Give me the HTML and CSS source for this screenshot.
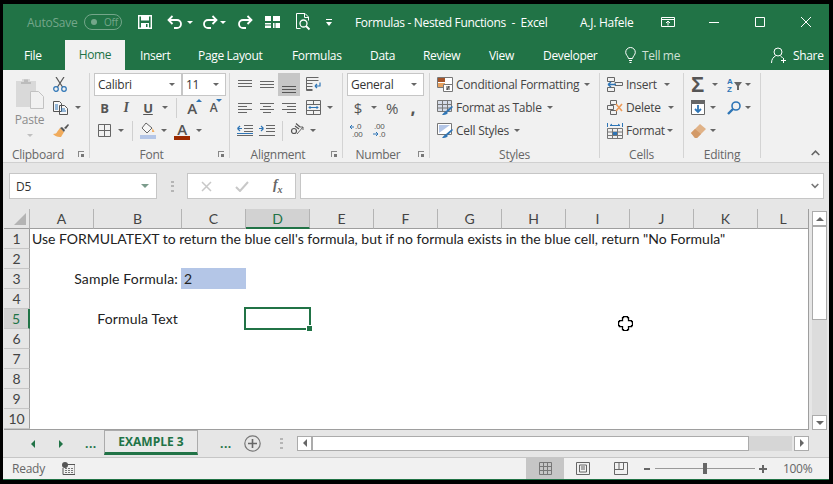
FILE: index.html
```html
<!DOCTYPE html>
<html lang="en">
<head>
<meta charset="utf-8">
<title>Formulas - Nested Functions - Excel</title>
<link rel="stylesheet" href="styles.css">
</head>
<body>
<div class="app">
  <header class="titlebar">
    <span class="autosave">AutoSave</span>
    <span class="toggle"><i class="knob"></i><b>Off</b></span>
    <svg width="14" height="14" viewBox="0 0 14 14"><path d="M.7.7h12.6v12.6H.7z" fill="none" stroke="#fff" stroke-width="1.4"/><path d="M3 1h8v4.500H3zM3 8h8v5H3z" fill="#fff"/><path d="M8 9h1.500v3H8z" fill="#217346"/></svg>
    <svg width="16" height="14" viewBox="0 0 16 14"><path d="M5.500 1 1.500 5l4 4M2 5h8a4 4 0 0 1 0 8H7" fill="none" stroke="#fff" stroke-width="1.800"/></svg>
    <i class="caret white"></i>
    <svg width="16" height="14" viewBox="0 0 16 14"><path d="M10.500 1l4 4-4 4M14 5H6a4 4 0 0 0 0 8h3" fill="none" stroke="#fff" stroke-width="1.800"/></svg>
    <i class="caret white"></i>
    <svg width="16" height="14" viewBox="0 0 16 14"><path d="M10.500 1l4 4-4 4M14 5H6a4 4 0 0 0 0 8h3" fill="none" stroke="#fff" stroke-width="1.800"/></svg>
    <svg width="15" height="12" viewBox="0 0 15 12"><path d="M0 0h6v5H0zM0 7h6v5H0zM8 0h7v5H8zM8 7h7v5H8z" fill="#fff"/><path d="M0 9h6M10 7v5" stroke="#217346"/></svg>
    <svg width="15" height="18" viewBox="0 0 15 18"><path d="M9 .5H.5v15h4M9 .5l3.500 3.500v3.500M8.500 1v3.500H12" fill="none" stroke="#fff"/><circle cx="7.500" cy="10.500" r="3.500" fill="none" stroke="#fff" stroke-width="1.300"/><path d="M10 13l3.500 3.500" stroke="#fff" stroke-width="1.800"/></svg>
    <svg class="qat-more" width="6" height="7" viewBox="0 0 6 7"><path d="M0 0h6v1H0zM0 3h6L3 7z" fill="#fff"/></svg>
    <span class="doc-title">Formulas - Nested Functions&nbsp; -&nbsp; Excel</span>
    <span class="user">A.J. Hafele</span>
    <svg width="14" height="10" viewBox="0 0 14 10"><path d="M.5.500h13v9H.5zM.5 2.500h13M7 8.500V4M5 6l2-2 2 2" fill="none" stroke="#fff"/></svg>
    <svg width="10" height="10" viewBox="0 0 10 10"><path d="M0 5.500h10" stroke="#fff"/></svg>
    <svg width="10" height="10" viewBox="0 0 10 10"><path d="M.5.500h9v9h-9z" fill="none" stroke="#fff"/></svg>
    <svg width="10" height="10" viewBox="0 0 10 10"><path d="M0 0l10 10M10 0L0 10" stroke="#fff"/></svg>
  </header>

  <nav class="tabs">
    <span>File</span>
    <span class="tab-home">Home</span>
    <span>Insert</span>
    <span>Page Layout</span>
    <span>Formulas</span>
    <span>Data</span>
    <span>Review</span>
    <span>View</span>
    <span>Developer</span>
    <svg width="11" height="17" viewBox="0 0 11 17"><path d="M3.500 11.500C3 9 .7 8 .7 5.300a4.800 4.800 0 0 1 9.600 0C10.300 8 8 9 7.500 11.500zM4 13.500h3M4.500 15.500h2" fill="none" stroke="#fff"/></svg>
    <span class="tell">Tell me</span>
    <svg width="16" height="17" viewBox="0 0 16 17"><circle cx="7" cy="5" r="4" fill="none" stroke="#fff"/><path d="M.5 16c0-4 2-6 4-7M9.500 9c1 .5 1.500 1 2 2M12.500 11v5M10 13.500h5" fill="none" stroke="#fff"/></svg>
    <span>Share</span>
  </nav>

  <section class="ribbon">
    <div class="group g-clip">
      <div class="body clip-body">
        <div class="paste">
          <svg width="29" height="31" viewBox="0 0 29 31"><path d="M1 3h6V1h8v2h6v26H1z" fill="#d9d9d9"/><path d="M9 1.500h4V4h3v2H6V4h3z" fill="#bcbcbc"/><path d="M15.500 13.500h8l5 5v12h-13z" fill="#f1f1f1" stroke="#c2c2c2"/></svg>
          <span class="paste-label">Paste</span>
          <i class="caret pale"></i>
        </div>
        <div class="clip-tool">
          <svg width="14" height="15" viewBox="0 0 14 15"><path d="M3 0l6.500 10M11 0L4.500 10" stroke="#555" stroke-width="1.200" fill="none"/><circle cx="3" cy="12" r="2.300" fill="none" stroke="#2e75b6" stroke-width="1.200"/><circle cx="11" cy="12" r="2.300" fill="none" stroke="#2e75b6" stroke-width="1.200"/></svg>
        </div>
        <div class="clip-tool">
          <svg width="16" height="14" viewBox="0 0 16 14"><path d="M.5.500h6l2 2v8h-8zM6.500 4.500h5l3 3v6h-8z" fill="#f7f7f7" stroke="#555"/><path d="M2 4h3M2 6h3M2 8h3M8 8h4M8 10h5" stroke="#2e75b6"/></svg>
          <i class="caret"></i>
        </div>
        <div class="clip-tool">
          <svg width="16" height="15" viewBox="0 0 16 15"><path d="M7 5l4 4-3 5c-3 .5-6-1-8-3 2 0 4-1 4-2z" fill="#f0ab5c"/><path d="M7 5l2-1 3 3-1 2zM11 5l4-4 1 1-3 4z" fill="#555"/></svg>
        </div>
      </div>
      <div class="group-foot"><span>Clipboard</span><i class="launcher"></i></div>
    </div>

    <div class="group g-font">
      <div class="body">
        <div class="row font-r1">
          <span class="select">Calibri<i class="caret"></i></span>
          <span class="select">11<i class="caret"></i></span>
        </div>
        <div class="row font-r2">
          <b class="glyph">B</b><em class="glyph serif-i">I</em><u class="glyph">U</u><i class="caret"></i><i class="sep"></i>
          <span class="grow-a big">A<i class="up"></i></span><span class="grow-a">A<i class="down"></i></span>
        </div>
        <div class="row font-r3">
          <svg width="13" height="13" viewBox="0 0 13 13"><path d="M.5.500h12v12H.5zM6.500.500v12M.5 6.500h12" fill="none" stroke="#666"/></svg><i class="caret"></i><i class="sep"></i>
          <svg width="16" height="17" viewBox="0 0 16 17"><path d="M6 1l6 5-5 5-5-5z" fill="#f7f7f7" stroke="#666"/><path d="M12.500 6l2 4h-2.500z" fill="#f0ab5c"/><path d="M0 13h16v4H0z" fill="#b4c6e7"/></svg><i class="caret"></i>
          <span class="font-color">A</span><i class="caret"></i>
        </div>
      </div>
      <div class="group-foot"><span>Font</span><i class="launcher"></i></div>
    </div>

    <div class="group g-align">
      <div class="body">
        <div class="row al-r1">
          <svg width="14" height="9" viewBox="0 0 14 9"><path d="M0 .500h14M0 3.500h14M0 6.500h14" stroke="#666"/></svg>
          <svg width="14" height="9" viewBox="0 0 14 9"><path d="M0 1.500h14M0 4.500h14M0 7.500h14" stroke="#666"/></svg>
          <span class="pressed"><svg width="14" height="9" viewBox="0 0 14 9"><path d="M0 2.500h14M0 5.500h14M0 8.500h14" stroke="#555"/></svg></span>
          <svg width="16" height="15" viewBox="0 0 16 15"><path d="M.5.500h12M.5 3.500h12M.5 6.500h6M.5 9.500h6M.5 12.500h6M.5.500v13h6" fill="none" stroke="#666"/><path d="M9 9h5V5.500M9 9l2-2M9 9l2 2" fill="none" stroke="#2e75b6" stroke-width="1.200"/></svg>
        </div>
        <div class="row al-r2">
          <svg width="14" height="10" viewBox="0 0 14 10"><path d="M0 .500h14M0 3.500h9M0 6.500h14M0 9.500h9" stroke="#666"/></svg>
          <svg width="14" height="10" viewBox="0 0 14 10"><path d="M0 .500h14M3 3.500h8M0 6.500h14M3 9.500h8" stroke="#666"/></svg>
          <svg width="14" height="10" viewBox="0 0 14 10"><path d="M0 .500h14M5 3.500h9M0 6.500h14M5 9.500h9" stroke="#666"/></svg>
          <svg width="15" height="15" viewBox="0 0 15 15"><path d="M.5.500h14v14H.5zM.5 4.500h14M.5 10.500h14M7.500.500v4M7.500 10.500v4" fill="none" stroke="#666"/><path d="M3 7.500h9M3 7.500l1.500-1.500M3 7.500L4.500 9M12 7.500L10.500 6M12 7.500L10.500 9" fill="none" stroke="#2e75b6"/></svg>
          <i class="caret"></i>
        </div>
        <div class="row al-r3">
          <svg width="16" height="12" viewBox="0 0 16 12"><path d="M7 .500h9M7 3.500h9M7 6.500h9M0 10.500h16" stroke="#666"/><path d="M5 3.500H.5M.5 3.500l2.500-2.500M.5 3.500L3 6M0 8.500h16" fill="none" stroke="#2e75b6" stroke-width="1.200"/></svg>
          <svg width="16" height="12" viewBox="0 0 16 12"><path d="M7 .500h9M7 3.500h9M7 6.500h9M0 10.500h16" stroke="#666"/><path d="M0 3.500h4.500M4.500 3.500L2 1M4.500 3.500L2 6" fill="none" stroke="#2e75b6" stroke-width="1.200"/></svg>
          <i class="sep"></i>
          <svg width="16" height="15" viewBox="0 0 16 15"><path d="M7 11L13 4M13 4h-3M13 4v3" fill="none" stroke="#666"/><circle cx="4" cy="8" r="2.500" fill="none" stroke="#555" stroke-width="1.200"/><path d="M5 3l4 3M6 .5L10 4" stroke="#555" fill="none" stroke-width="1.200"/></svg>
          <i class="caret"></i>
        </div>
      </div>
      <div class="group-foot"><span>Alignment</span><i class="launcher"></i></div>
    </div>

    <div class="group g-num">
      <div class="body">
        <div class="row num-r1"><span class="select wide">General<i class="caret"></i></span></div>
        <div class="row num-r2"><span class="big-sym">$</span><i class="caret"></i><span class="big-sym">%</span><span class="big-sym bold">,</span></div>
        <div class="row num-r3">
          <svg width="15" height="15" viewBox="0 0 15 15"><text x="5" y="6" class="dec">.0</text><text x="2" y="14" class="dec">.00</text><path d="M0 4h4M0 4l2-2M0 4l2 2" stroke="#2e75b6" fill="none"/></svg>
          <svg width="15" height="15" viewBox="0 0 15 15"><text x="2" y="6" class="dec">.00</text><text x="7" y="14" class="dec">.0</text><path d="M1 11h5M6 11L4 9M6 11l-2 2" stroke="#2e75b6" fill="none"/></svg>
        </div>
      </div>
      <div class="group-foot"><span>Number</span><i class="launcher"></i></div>
    </div>

    <div class="group g-styles">
      <div class="body">
        <div class="row style-row">
          <svg width="16" height="15" viewBox="0 0 16 15"><path d="M.5.500h15v10H.5z" fill="#fff" stroke="#777"/><path d="M1 1h7v4H1z" fill="#a5552a"/><path d="M1 6h7v4H1z" fill="#e8a25f"/><path d="M6.500 7.500h9v7h-9z" fill="#fff" stroke="#777"/><path d="M9 10h4M9 12h4M12 9l-2 4" stroke="#444"/></svg>
          <span>Conditional Formatting</span><i class="caret"></i>
        </div>
        <div class="row style-row">
          <svg width="16" height="15" viewBox="0 0 16 15"><path d="M.5.500h14v11H.5zM5.500.500v11M10.500.500v11M.5 4.500h14M.5 8h14" fill="#d6dce8" stroke="#777"/><path d="M15 6l1 1-5 5-2-1zM9 11l2 2c-2 2-4 2-6 2 1-1 2-3 4-4z" fill="#2e75b6"/></svg>
          <span>Format as Table</span><i class="caret"></i>
        </div>
        <div class="row style-row">
          <svg width="16" height="15" viewBox="0 0 16 15"><path d="M.5.500h14v11H.5z" fill="#fff" stroke="#777"/><path d="M2 2h11L2 10z" fill="#b4c6e7"/><path d="M15 6l1 1-5 5-2-1zM9 11l2 2c-2 2-4 2-6 2 1-1 2-3 4-4z" fill="#2e75b6"/></svg>
          <span>Cell Styles</span><i class="caret"></i>
        </div>
      </div>
      <div class="group-foot plain"><span>Styles</span></div>
    </div>

    <div class="group g-cells">
      <div class="body">
        <div class="row cell-row c-ins">
          <svg width="16" height="15" viewBox="0 0 16 15"><path d="M.5.500h7v4h-7zM.5 10.500h7v4h-7zM8 5.500h7.500v3H8z" fill="none" stroke="#666"/><path d="M9 7.500H1M1 7.500l3-2.500M1 7.500L4 10" fill="none" stroke="#2e75b6" stroke-width="1.300"/></svg>
          <span>Insert</span><i class="caret"></i>
        </div>
        <div class="row cell-row c-del">
          <svg width="16" height="15" viewBox="0 0 16 15"><path d="M3.500.500h6v4h-6zM.5 5.500h6v4h-6zM3.500 10.500h6v4h-6z" fill="none" stroke="#666"/><path d="M9 4l6 7M15 4l-6 7" stroke="#ed9b59" stroke-width="1.600"/></svg>
          <span>Delete</span><i class="caret"></i>
        </div>
        <div class="row cell-row c-fmt">
          <svg width="16" height="16" viewBox="0 0 16 16"><path d="M.5 5.500h15v10H.5zM5.500 5.500v10M10.500 5.500v10M.5 9h15M.5 12.500h15" fill="none" stroke="#777"/><path d="M6 9h4v3H6z" fill="#2e75b6"/><path d="M3 2.500h10M.5 0v4M15.500 0v4M3 2.500L5 1M13 2.500L11 1" stroke="#2e75b6" fill="none"/></svg>
          <span>Format</span><i class="caret"></i>
        </div>
      </div>
      <div class="group-foot plain"><span>Cells</span></div>
    </div>

    <div class="group g-edit">
      <div class="body">
        <div class="row ed-r1">
          <span class="sigma">Σ</span><i class="caret"></i>
          <svg width="15" height="15" viewBox="0 0 15 15"><text x="0" y="6.500" class="az">A</text><text x="0" y="14.500" class="az">Z</text><path d="M7 5h8l-3 4v4h-2V9z" fill="#666"/></svg><i class="caret"></i>
        </div>
        <div class="row ed-r2">
          <svg width="14" height="15" viewBox="0 0 14 15"><path d="M0 0h14v4H0z" fill="#666"/><path d="M.5 3.500h13v11H.5z" fill="#fff" stroke="#666"/><path d="M7 5v7M4 9l3 3 3-3" fill="none" stroke="#2e75b6" stroke-width="1.800"/></svg><i class="caret"></i>
          <svg width="14" height="14" viewBox="0 0 14 14"><circle cx="9" cy="5" r="4" fill="none" stroke="#2e75b6" stroke-width="1.600"/><path d="M6 8l-5 5" stroke="#2e75b6" stroke-width="2.400"/></svg><i class="caret"></i>
        </div>
        <div class="row ed-r3">
          <svg width="15" height="14" viewBox="0 0 15 14"><path d="M0 9l9-9 6 5-9 9H4z" fill="#e0b287"/><path d="M0 9l4-4 6 5-4 4H4z" fill="#d39a68"/></svg><i class="caret"></i>
        </div>
      </div>
      <div class="group-foot plain"><span>Editing</span></div>
    </div>

    <svg class="collapse" width="9" height="6" viewBox="0 0 9 6"><path d="M.7 5l3.800-3.800L8.300 5" fill="none" stroke="#666" stroke-width="1.600"/></svg>
  </section>

  <section class="formula-bar">
    <div class="namebox"><span>D5</span><i class="caret name-caret"></i></div>
    <svg class="grip" width="3" height="11" viewBox="0 0 3 11"><path d="M0 0h3v2H0zM0 4h3v2H0zM0 9h3v2H0z" fill="#b5b5b5"/></svg>
    <div class="fx-box">
      <svg width="11" height="11" viewBox="0 0 11 11"><path d="M1 1l9 9M10 1l-9 9" stroke="#c8c8c8" stroke-width="1.500"/></svg>
      <svg width="14" height="11" viewBox="0 0 14 11"><path d="M1 6l4 4 8-9" fill="none" stroke="#c8c8c8" stroke-width="2"/></svg>
      <span class="fx">f<sub>x</sub></span>
    </div>
    <div class="formula-input"><svg width="8" height="6" viewBox="0 0 8 6"><path d="M.7 1L4 4.300 7.300 1" fill="none" stroke="#777" stroke-width="1.600"/></svg></div>
  </section>

  <section class="sheet">
    <div class="grid">
      <div class="hdr corner"><i class="tri"></i></div>
      <div class="hdr">A</div><div class="hdr">B</div><div class="hdr">C</div><div class="hdr sel">D</div><div class="hdr">E</div><div class="hdr">F</div><div class="hdr">G</div><div class="hdr">H</div><div class="hdr">I</div><div class="hdr">J</div><div class="hdr">K</div><div class="hdr last">L</div>

      <div class="rh">1</div><div class="cell text-a1">Use FORMULATEXT to return the blue cell's formula, but if no formula exists in the blue cell, return "No Formula"</div><div class="cell span-11"></div>
      <div class="rh">2</div><div class="cell span-12"></div>
      <div class="rh">3</div><div class="cell"></div><div class="cell right">Sample Formula:</div><div class="cell blue">2</div><div class="cell span-9"></div>
      <div class="rh">4</div><div class="cell span-12"></div>
      <div class="rh sel">5</div><div class="cell"></div><div class="cell right">Formula Text</div><div class="cell"></div><div class="cell active"></div><div class="cell span-8"></div>
      <div class="rh">6</div><div class="cell span-12"></div>
      <div class="rh">7</div><div class="cell span-12"></div>
      <div class="rh">8</div><div class="cell span-12"></div>
      <div class="rh">9</div><div class="cell span-12"></div>
      <div class="rh">10</div><div class="cell span-12"></div>

      <svg class="cursor" width="15" height="15" viewBox="0 0 15 15"><path d="M5.500.700h4v1h1v3h3v1h1v4h-1v1h-3v3h-1v1h-4v-1h-1v-3h-3v-1h-1v-4h1v-1h3v-3h1z" fill="#fff" stroke="#000" stroke-width="1.300"/></svg>
    </div>
    <div class="vscroll">
      <span class="sbtn"><i class="tri-up"></i></span>
      <span class="vthumb"></span>
      <span class="vtrack"></span>
      <span class="sbtn"><i class="tri-down"></i></span>
    </div>
  </section>

  <section class="sheetbar">
    <i class="tri-left green"></i>
    <i class="tri-right green"></i>
    <span class="more">...</span>
    <span class="sheet-tab">EXAMPLE 3</span>
    <span class="more">...</span>
    <svg width="17" height="17" viewBox="0 0 17 17"><circle cx="8.500" cy="8.500" r="7.700" fill="none" stroke="#777" stroke-width="1.200"/><path d="M4 8.500h9M8.500 4v9" stroke="#666" stroke-width="1.600"/></svg>
    <svg width="3" height="11" viewBox="0 0 3 11"><path d="M0 0h3v2H0zM0 4h3v2H0zM0 9h3v2H0z" fill="#b5b5b5"/></svg>
    <div class="hscroll">
      <span class="sbtn"><i class="tri-left"></i></span>
      <span class="hthumb"></span>
      <span class="htrack"></span>
      <span class="sbtn"><i class="tri-right"></i></span>
    </div>
  </section>

  <footer class="status">
    <span>Ready</span>
    <svg width="13" height="13" viewBox="0 0 13 13"><circle cx="3" cy="3" r="3" fill="#555"/><path d="M3 2.500h10v10H1V6" fill="none" stroke="#555"/><path d="M3 6h8v5H3z" fill="#777"/><path d="M3 7.500h8M3 9.500h8M5.500 6v5M8.500 6v5" stroke="#f1f1f1"/></svg>
    <span class="view on"><svg width="13" height="13" viewBox="0 0 13 13"><path d="M.5.500h12v12H.5zM4.500.500v12M8.500.500v12M.5 4.500h12M.5 8.500h12" fill="none" stroke="#777"/></svg></span>
    <span class="view"><svg width="14" height="13" viewBox="0 0 14 13"><path d="M.5.500h13v12H.5z" fill="none" stroke="#666"/><path d="M3.500 3h7v7h-7zM5 5h4M5 7h4" fill="none" stroke="#666"/></svg></span>
    <span class="view"><svg width="14" height="13" viewBox="0 0 14 13"><path d="M.5.500h13v12H.5zM5 .500v7h4.500v-7M.5 7.500H5" fill="none" stroke="#666"/></svg></span>
    <span class="zoom-sym"></span>
    <span class="slider"><i></i></span>
    <span class="zoom-sym plus"></span>
    <span class="pct">100%</span>
  </footer>
</div>
</body>
</html>
```

FILE: styles.css
```css
* { box-sizing: border-box; }
html, body { margin: 0; height: 100%; background: #000; }
body { font-family: "Open Sans", "Noto Sans", sans-serif; font-size: 12px; letter-spacing: -0.25px; color: #444; overflow: hidden; }
i { font-style: normal; display: block; }
svg { display: block; }

.app { width: 826px; height: 476px; margin: 4px 0 0 3px; background: #e6e6e6; display: flex; flex-direction: column; }

/* title bar */
.titlebar {
  height: 36px; padding-left: 24px; background: #217346; color: #fff; display: grid; align-items: center;
  grid-template-columns: 57px 54px 29px 20px 15px 18px 17px 28px 31px 30px 29px 225px 81px 48px 46px 46px 1fr;
}
.autosave { color: #74a68a; }
.toggle { width: 38px; height: 16px; border: 1px solid #74a68a; border-radius: 8px; display: flex; align-items: center; gap: 7px; padding-left: 6px; color: #74a68a; font-size: 10px; }
.toggle b { font-weight: 400; }
.knob { width: 6px; height: 6px; border-radius: 50%; background: #74a68a; }
.doc-title { letter-spacing: -0.32px; }

.caret { width: 0; height: 0; border-left: 3px solid transparent; border-right: 3px solid transparent; border-top: 3px solid #666; }
.caret.white { border-top-color: #fff; }
.caret.pale { border-top-color: #c0c0c0; }

/* tabs */
.tabs {
  height: 30px; padding-left: 21px; background: #217346; color: #fff; display: grid; align-items: center; letter-spacing: -0.33px;
  grid-template-columns: 41px 75px 58px 94px 78px 53px 66px 54px 82px 17px 129px 22px 1fr;
}
.tab-home { width: 60px; height: 30px; line-height: 30px; text-align: center; background: #f1f1f1; color: #217346; }
.tell { color: #cfe0d6; }

/* ribbon */
.ribbon { height: 93px; padding-top: 3px; background: #f1f1f1; border-bottom: 1px solid #d0d0d0; display: flex; position: relative; }
.group { height: 85px; border-right: 1px solid #d4d4d4; display: flex; flex-direction: column; flex: none; }
.g-clip { width: 87px; }
.g-font { width: 140px; }
.g-align { width: 113px; }
.g-num { width: 87px; }
.g-styles { width: 170px; }
.g-cells { width: 84px; }
.g-edit { width: 77px; }
.body { height: 69px; flex: none; padding-left: 4px; }
.row { height: 23px; display: grid; align-items: center; justify-items: center; }
.group-foot { display: flex; align-items: center; height: 16px; margin-top: 4px; color: #666; flex: none; }
.group-foot span { flex: 1; text-align: center; padding-right: 5px; }
.group-foot.plain span { padding-right: 0; }
.launcher { width: 6px; height: 6px; margin-right: 5px; border-left: 1px solid #888; border-top: 1px solid #888; position: relative; }
.launcher::after { content: ""; position: absolute; right: 0; bottom: 0; width: 3px; height: 3px; background: #777; }

.sep { width: 1px; height: 20px; background: #d0d0d0; }
.select { height: 23px; background: #fff; border: 1px solid #c6c6c6; display: flex; align-items: center; justify-content: space-between; padding: 0 6px 0 3px; justify-self: stretch; color: #333; }
.select.wide { width: 77px; }

/* clipboard */
.clip-body { display: grid; grid-template-columns: 50px 1fr; grid-template-rows: repeat(3, 23px); padding-left: 0; }
.paste { grid-row: 1 / 4; display: flex; flex-direction: column; align-items: center; padding-top: 5px; padding-left: 3px; }
.paste-label { margin-top: 3px; line-height: 16px; color: #8c8c8c; }
.paste .caret { margin-top: 6px; }
.clip-tool { display: flex; align-items: center; gap: 6px; }

/* font */
.font-r1 { grid-template-columns: 88px 44px; }
.font-r2 { grid-template-columns: 21px 22px 22px 12px 10px 22px 21px; }
.font-r3 { grid-template-columns: 21px 12px 10px 22px 10px 26px 7px; }
.glyph { font-size: 13px; color: #555; font-style: normal; font-weight: 700; }
.serif-i { font-family: "Liberation Serif", serif; font-style: italic; font-size: 14px; }
.grow-a { position: relative; font-size: 12px; color: #555; font-weight: 600; }
.grow-a.big { font-size: 15px; }
.up, .down { position: absolute; right: -5px; top: 1px; width: 0; height: 0; border-left: 3px solid transparent; border-right: 3px solid transparent; }
.up { border-bottom: 3px solid #2e75b6; }
.down { border-top: 3px solid #2e75b6; top: 0; }
.font-color { width: 16px; border-bottom: 4px solid #9c2a00; text-align: center; line-height: 14px; font-size: 15px; font-weight: 600; color: #555; }

/* alignment */
.al-r1 { grid-template-columns: 22px 22px 22px 28px; }
.al-r2 { grid-template-columns: 22px 22px 22px 27px 6px; }
.al-r3 { grid-template-columns: 22px 22px 8px 24px 6px; }
.pressed { width: 22px; height: 23px; background: #c6c6c6; display: flex; align-items: flex-end; justify-content: center; padding-bottom: 3px; }

/* number */
.num-r1 { grid-template-columns: 77px; }
.num-r2 { grid-template-columns: 22px 10px 26px 16px; }
.num-r3 { grid-template-columns: 21px 22px; }
.big-sym { font-size: 15px; color: #555; }
.big-sym.bold { font-weight: 800; }
.dec { font-size: 8px; fill: #555; font-family: "Liberation Sans", sans-serif; }

/* styles */
.g-styles .body { padding-left: 7px; }
.style-row { display: flex; align-items: center; gap: 3px; }
.style-row .caret { margin-left: 2px; }

/* cells */
.g-cells .body { padding-left: 7px; }
.cell-row { justify-items: start; }
.c-ins { grid-template-columns: 19px 38px 6px; }
.c-del { grid-template-columns: 19px 42px 6px; }
.c-fmt { grid-template-columns: 19px 41px 6px; }

/* editing */
.g-edit .body { padding-left: 7px; }
.g-edit .row { justify-items: start; }
.ed-r1 { grid-template-columns: 21px 15px 18px 6px; }
.ed-r2 { grid-template-columns: 19px 17px 18px 6px; }
.ed-r3 { grid-template-columns: 19px 6px; }
.sigma { font: 700 22px/23px "Liberation Sans", sans-serif; color: #555; }
.az { font: 700 8px "Liberation Sans", sans-serif; fill: #2e75b6; }
.collapse { position: absolute; right: 9px; bottom: 6px; }

/* formula bar */
.formula-bar { height: 36px; padding: 10px 5px 0 6px; display: flex; align-items: flex-start; flex: none; }
.namebox { width: 148px; height: 26px; background: #fff; border: 1px solid #c6c6c6; display: flex; align-items: center; justify-content: space-between; padding: 0 7px 0 6px; color: #333; }
.name-caret { border-left-width: 4px; border-right-width: 4px; border-top: 4px solid #7c9c8c; }
.grip { margin: 8px 13px 0 14px; flex: none; }
.fx-box { width: 109px; height: 26px; background: #fff; border: 1px solid #c6c6c6; display: grid; grid-template-columns: 34px 38px 1fr; align-items: center; padding-left: 13px; flex: none; }
.fx { font: italic 700 14px/1 "Liberation Serif", serif; color: #666; }
.fx sub { font-size: 10px; }
.formula-input { flex: 1; height: 26px; margin-left: 4px; background: #fff; border: 1px solid #c6c6c6; display: flex; align-items: center; justify-content: flex-end; padding-right: 4px; }

/* sheet */
.sheet { display: flex; padding-top: 10px; height: 231px; flex: none; }
.grid {
  width: 805px; height: 221px; margin-left: 1px; position: relative; display: grid; background: #fff; border-right: 1px solid #9e9e9e; border-bottom: 1px solid #9e9e9e;
  grid-template-columns: 26px 64px 88px 64px 64px 64px 64px 64px 64px 64px 64px 64px 50px;
  grid-template-rows: repeat(11, 20px);
  font: 14px/20px "Lato", "Noto Sans", sans-serif;
  letter-spacing: 0;
  color: #222;
}
.hdr { background: #e6e6e6; border-bottom: 1px solid #9e9e9e; border-right: 1px solid #b4b4b4; text-align: center; color: #444; font-size: 14px; line-height: 19px; }
.hdr.last { border-right: 0; padding-right: 0; }
.hdr.sel { background: #d2d2d2; color: #217346; border-bottom: 2px solid #217346; }
.corner { position: relative; }
.tri { position: absolute; right: 3px; bottom: 3px; width: 0; height: 0; border-left: 12px solid transparent; border-bottom: 12px solid #b4b4b4; }
.rh { background: #e6e6e6; border-bottom: 1px solid #c6c6c6; border-right: 1px solid #9e9e9e; text-align: center; color: #444; }
.rh.sel { background: #d2d2d2; color: #217346; border-right: 2px solid #217346; }
.cell { white-space: nowrap; padding-left: 2px; min-width: 0; }
.text-a1 { overflow: visible; }
.span-8 { grid-column: span 8; }
.span-9 { grid-column: span 9; }
.span-11 { grid-column: span 11; }
.span-12 { grid-column: span 12; }
.right { display: flex; justify-content: flex-end; padding: 0 4px 0 0; letter-spacing: 0.15px; }
.blue { background: #b4c6e7; margin-left: -1px; padding-left: 3px; height: 21px; margin-top: -1px; line-height: 22px; }
.active { position: relative; }
.active::before { content: ""; position: absolute; inset: -2px -1px -1px -2px; border: 2px solid #217346; }
.active::after { content: ""; position: absolute; right: -2px; bottom: -2px; width: 5px; height: 5px; background: #217346; border-left: 1px solid #fff; border-top: 1px solid #fff; }
.cursor { position: absolute; left: 614px; top: 107px; }

.vscroll { width: 21px; padding: 2px 3px 0 3px; display: flex; flex-direction: column; height: 221px; }
.sbtn { flex: none; width: 15px; height: 15px; background: #fff; border: 1px solid #ababab; display: flex; align-items: center; justify-content: center; }
.vthumb { flex: none; height: 94px; background: #fff; border: 1px solid #ababab; }
.vtrack { flex: 1; background: #dcdcdc; }
.tri-up, .tri-down { width: 0; height: 0; border-left: 4px solid transparent; border-right: 4px solid transparent; }
.tri-up { border-bottom: 4px solid #666; }
.tri-down { border-top: 4px solid #666; }
.tri-left, .tri-right { width: 0; height: 0; border-top: 4px solid transparent; border-bottom: 4px solid transparent; }
.tri-left { border-right: 4px solid #666; }
.tri-right { border-left: 4px solid #666; }
.tri-left.green { border-right-color: #217346; }
.tri-right.green { border-left-color: #217346; }

/* sheet tabs */
.sheetbar {
  height: 28px; padding-left: 28px; display: grid; align-items: center; justify-items: start; flex: none;
  grid-template-columns: 28px 26px 19px 116px 24px 36px 17px 1fr;
  border-bottom: 1px solid #c6c6c6;
}
.more { font-weight: 700; color: #217346; letter-spacing: 0.5px; font-size: 12px; }
.sheet-tab { width: 94px; height: 25px; margin-top: -3px; background: #e9e9e9; border: 1px solid #ababab; border-bottom: 3px solid #217346; text-align: center; line-height: 21px; font-weight: 700; color: #217346; letter-spacing: 0; }
.hscroll { width: 512px; height: 15px; display: flex; margin-top: -1px; }
.hthumb { flex: none; width: 437px; background: #fff; border: 1px solid #ababab; }
.htrack { flex: 1; background: #d6d6d6; margin-right: 2px; }

/* status bar */
.status {
  flex: 1; padding-left: 9px; background: #f1f1f1; display: grid; align-items: center; justify-items: start; color: #666;
  grid-template-columns: 50px 464px 38px 38px 38px 15px 100px 28px 1fr;
  border-bottom: 1px solid #217346;
}
.view { width: 38px; height: 100%; display: flex; align-items: center; justify-content: center; }
.view.on { background: #c6c6c6; }
.zoom-sym { width: 6px; height: 2px; background: #666; margin-left: 4px; position: relative; }
.plus { width: 8px; margin-left: 4px; }
.plus::after { content: ""; position: absolute; left: 3px; top: -3px; width: 2px; height: 8px; background: #666; }
.slider { width: 100px; height: 1px; background: #999; position: relative; }
.slider i { position: absolute; left: 48px; top: -5px; width: 4px; height: 11px; background: #666; }
.pct { letter-spacing: -0.3px; }
```
